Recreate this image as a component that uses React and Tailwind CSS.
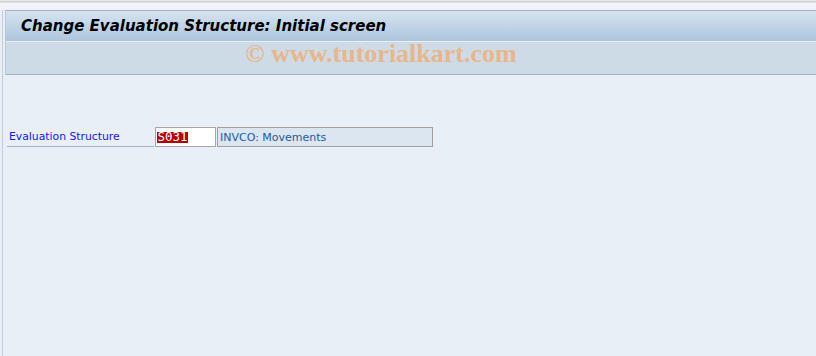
export default function App() {
  return (
    <div className="w-[816px] h-[356px] overflow-hidden bg-[#e8eff7] flex flex-col font-['DejaVu_Sans',sans-serif]">
      <div className="h-[10px] shrink-0 [background:linear-gradient(#ffffff_0px,#cfcfcf_1px,#cfcfcf_2px,#f4f5fa_3px,#eef1f7_10px)]" />
      <div className="flex-1 flex flex-col ml-[2px] border-l border-l-[#c3ccd8]">
        <div className="ml-[2px] border-t border-t-[#a2b2c6] border-l border-l-[#b8c6d6]">
          <div className="h-[31px] flex items-center pl-[15px] bg-gradient-to-b from-[#d5e3ef] to-[#adc6dd] border-b border-b-[#e6eef6]">
            <h1 className="text-[15px] font-bold italic text-black leading-none">
              Change Evaluation Structure: Initial screen
            </h1>
          </div>
          <div className="h-[33px] bg-[#cddbe7] border-b border-b-[#a3b3c3] flex items-center justify-center">
            <span className="ml-[-60px] mt-[-8px] font-['Liberation_Serif',serif] font-bold text-[26px] leading-none text-[#e9b68a]">
              © www.tutorialkart.com
            </span>
          </div>
        </div>
        <div className="pt-[52px] pl-[4px]">
          <div className="flex items-start h-[20px]">
            <div className="w-[147px] h-[20px] border-b border-b-[#a9b3bd] pl-[2px] pt-[5px] text-[10.8px] text-[#1414ff] leading-none">
              Evaluation Structure
            </div>
            <div className="ml-[1px] w-[61px] h-[20px] bg-white border border-[#a6a6a6] flex items-center pl-[1px]">
              <div className="flex items-center h-[11px] bg-[#b40000] text-white font-['DejaVu_Sans_Mono',monospace] text-[12.5px] leading-none px-[0.5px]">
                S031
              </div>
            </div>
            <div className="ml-[1px] w-[216px] h-[20px] bg-[#dbe6f1] border border-[#a0a0a0] text-[11px] text-[#1a5a9e] pl-[2px] pt-[4px] leading-none">
              INVCO: Movements
            </div>
          </div>
        </div>
      </div>
    </div>
  )
}
